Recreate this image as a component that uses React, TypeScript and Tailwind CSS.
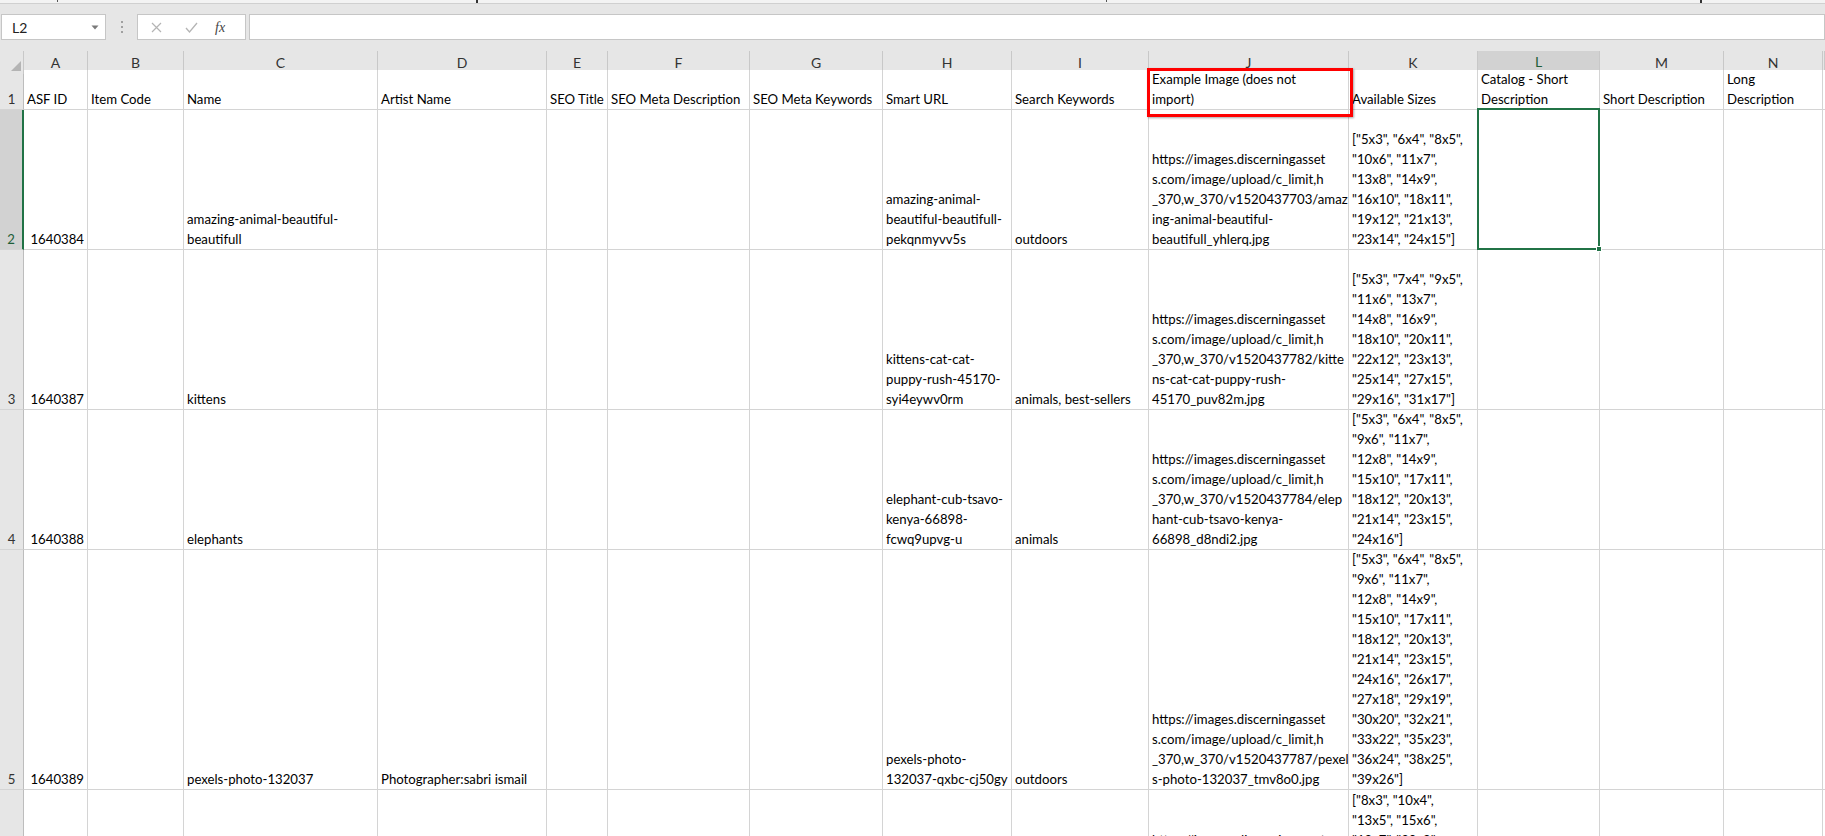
import React from "react";

type Cell = { lines?: string[]; right?: boolean; top?: boolean } | null;

const GRID =
  "grid grid-cols-[24px_64px_96px_194px_169px_61px_142px_133px_129px_137px_200px_129px_122px_124px_99px_1fr]";

const letters = ["A", "B", "C", "D", "E", "F", "G", "H", "I", "J", "K", "L", "M", "N", ""];

const rows: { n: string; h: string; cells: Cell[]; sel?: boolean }[] = [
  {
    n: "1",
    h: "h-[40px]",
    cells: [
      { lines: ["ASF ID"] },
      { lines: ["Item Code"] },
      { lines: ["Name"] },
      { lines: ["Artist Name"] },
      { lines: ["SEO Title"] },
      { lines: ["SEO Meta Description"] },
      { lines: ["SEO Meta Keywords"] },
      { lines: ["Smart URL"] },
      { lines: ["Search Keywords"] },
      { lines: ["Example Image (does not", "import)"] },
      { lines: ["Available Sizes"] },
      { lines: ["Catalog - Short", "Description"] },
      { lines: ["Short Description"] },
      { lines: ["Long", "Description"] },
      null,
    ],
  },
  {
    n: "2",
    h: "h-[140px]",
    sel: true,
    cells: [
      { lines: ["1640384"], right: true },
      null,
      { lines: ["amazing-animal-beautiful-", "beautifull"] },
      null,
      null,
      null,
      null,
      { lines: ["amazing-animal-", "beautiful-beautifull-", "pekqnmyvv5s"] },
      { lines: ["outdoors"] },
      {
        lines: [
          "https://images.discerningasset",
          "s.com/image/upload/c_limit,h",
          "_370,w_370/v1520437703/amaz",
          "ing-animal-beautiful-",
          "beautifull_yhlerq.jpg",
        ],
      },
      {
        lines: [
          '["5x3", "6x4", "8x5",',
          '"10x6", "11x7",',
          '"13x8", "14x9",',
          '"16x10", "18x11",',
          '"19x12", "21x13",',
          '"23x14", "24x15"]',
        ],
      },
      null,
      null,
      null,
      null,
    ],
  },
  {
    n: "3",
    h: "h-[160px]",
    cells: [
      { lines: ["1640387"], right: true },
      null,
      { lines: ["kittens"] },
      null,
      null,
      null,
      null,
      { lines: ["kittens-cat-cat-", "puppy-rush-45170-", "syi4eywv0rm"] },
      { lines: ["animals, best-sellers"] },
      {
        lines: [
          "https://images.discerningasset",
          "s.com/image/upload/c_limit,h",
          "_370,w_370/v1520437782/kitte",
          "ns-cat-cat-puppy-rush-",
          "45170_puv82m.jpg",
        ],
      },
      {
        lines: [
          '["5x3", "7x4", "9x5",',
          '"11x6", "13x7",',
          '"14x8", "16x9",',
          '"18x10", "20x11",',
          '"22x12", "23x13",',
          '"25x14", "27x15",',
          '"29x16", "31x17"]',
        ],
      },
      null,
      null,
      null,
      null,
    ],
  },
  {
    n: "4",
    h: "h-[140px]",
    cells: [
      { lines: ["1640388"], right: true },
      null,
      { lines: ["elephants"] },
      null,
      null,
      null,
      null,
      { lines: ["elephant-cub-tsavo-", "kenya-66898-", "fcwq9upvg-u"] },
      { lines: ["animals"] },
      {
        lines: [
          "https://images.discerningasset",
          "s.com/image/upload/c_limit,h",
          "_370,w_370/v1520437784/elep",
          "hant-cub-tsavo-kenya-",
          "66898_d8ndi2.jpg",
        ],
      },
      {
        lines: [
          '["5x3", "6x4", "8x5",',
          '"9x6", "11x7",',
          '"12x8", "14x9",',
          '"15x10", "17x11",',
          '"18x12", "20x13",',
          '"21x14", "23x15",',
          '"24x16"]',
        ],
      },
      null,
      null,
      null,
      null,
    ],
  },
  {
    n: "5",
    h: "h-[240px]",
    cells: [
      { lines: ["1640389"], right: true },
      null,
      { lines: ["pexels-photo-132037"] },
      { lines: ["Photographer:sabri ismail"] },
      null,
      null,
      null,
      { lines: ["pexels-photo-", "132037-qxbc-cj50gy"] },
      { lines: ["outdoors"] },
      {
        lines: [
          "https://images.discerningasset",
          "s.com/image/upload/c_limit,h",
          "_370,w_370/v1520437787/pexel",
          "s-photo-132037_tmv8o0.jpg",
        ],
      },
      {
        lines: [
          '["5x3", "6x4", "8x5",',
          '"9x6", "11x7",',
          '"12x8", "14x9",',
          '"15x10", "17x11",',
          '"18x12", "20x13",',
          '"21x14", "23x15",',
          '"24x16", "26x17",',
          '"27x18", "29x19",',
          '"30x20", "32x21",',
          '"33x22", "35x23",',
          '"36x24", "38x25",',
          '"39x26"]',
        ],
      },
      null,
      null,
      null,
      null,
    ],
  },
  {
    n: "",
    h: "h-[140px]",
    cells: [
      null,
      null,
      null,
      null,
      null,
      null,
      null,
      null,
      null,
      { lines: ["", "", "https://images.discerningasset"], top: true },
      { lines: ['["8x3", "10x4",', '"13x5", "15x6",', '"18x7", "20x8",'], top: true },
      null,
      null,
      null,
      null,
    ],
  },
];

function DataCell({ cell }: { cell: Cell }) {
  return (
    <div
      className={
        "relative flex flex-col overflow-hidden border-r border-b border-[#d4d4d4] bg-white px-[3px] " +
        (cell?.top ? "justify-start " : "justify-end ") +
        (cell?.right ? "items-end" : "items-start")
      }
    >
      {cell?.lines?.map((l, i) => (
        <div key={i} className="h-[20px] shrink-0 whitespace-nowrap leading-[20px]">
          {l}
        </div>
      ))}
    </div>
  );
}

export default function App() {
  return (
    <div className="relative h-[836px] w-[1825px] overflow-hidden bg-[#e6e6e6] font-[Lato,'Open_Sans',sans-serif] text-[13.2px] text-black">
      {/* top strip */}
      <div className="relative h-[4px] border-b border-[#d0d0d0] bg-[#f3f3f3]">
        <span className="absolute left-[57px] top-0 h-[2px] w-[1px] bg-[#555]" />
        <span className="absolute left-[476px] top-0 h-[3px] w-[2px] bg-[#333]" />
        <span className="absolute left-[1106px] top-0 h-[2px] w-[1px] bg-[#555]" />
        <span className="absolute left-[1700px] top-0 h-[3px] w-[2px] bg-[#333]" />
      </div>

      {/* formula bar */}
      <div className="mt-[10px] flex h-[26px] items-stretch">
        <div className="ml-[1px] flex w-[105px] items-center justify-between border border-[#c6c6c6] bg-white pl-[10px] pr-[6px]">
          <span className="text-[14px] text-[#222]">L2</span>
          <svg width="8" height="5" viewBox="0 0 8 5">
            <path d="M0.5 0.5 L7.5 0.5 L4 4.5 Z" fill="#7a7a7a" />
          </svg>
        </div>
        <div className="flex w-[31px] flex-col items-center justify-center gap-[3px]">
          <span className="h-[2px] w-[2px] bg-[#a0a0a0]" />
          <span className="h-[2px] w-[2px] bg-[#a0a0a0]" />
          <span className="h-[2px] w-[2px] bg-[#a0a0a0]" />
        </div>
        <div className="flex w-[109px] items-center border border-[#c6c6c6] bg-white">
          <svg className="ml-[13px]" width="11" height="11" viewBox="0 0 11 11">
            <path d="M1 1 L10 10 M10 1 L1 10" stroke="#b4b4b4" strokeWidth="1.2" />
          </svg>
          <svg className="ml-[23px]" width="13" height="11" viewBox="0 0 13 11">
            <path d="M1 6 L4.5 10 L12 1" stroke="#b4b4b4" strokeWidth="1.3" fill="none" />
          </svg>
          <span className="ml-[17px] font-['Liberation_Serif',serif] text-[14px] italic text-[#444]">fx</span>
        </div>
        <div className="ml-[3px] flex-1 border border-[#c6c6c6] bg-white" />
      </div>

      {/* sheet */}
      <div className="mt-[11px]">
        {/* column header */}
        <div className={GRID + " h-[19px]"}>
          <div className="relative border-r border-[#c8c8c8] bg-[#e6e6e6]">
            <svg className="absolute right-[2px] bottom-[3px]" width="10" height="10" viewBox="0 0 10 10">
              <path d="M10 0 L10 10 L0 10 Z" fill="#b4b4b4" />
            </svg>
          </div>
          {letters.map((l, i) => (
            <div
              key={i}
              className={
                "flex items-center justify-center border-r text-[14px] " +
                (l === "L"
                  ? "border-[#c8c8c8] border-b-2 border-b-[#217346] bg-[#d2d2d2] text-[#1e5e38]"
                  : "border-[#c8c8c8] bg-[#e6e6e6] text-[#333]")
              }
            >
              {l}
            </div>
          ))}
        </div>

        {rows.map((r, idx) => (
          <div key={idx} className={GRID + " " + r.h}>
            <div
              className={
                "flex items-end justify-center border-b border-[#d4d4d4] leading-[20px] " +
                (r.sel
                  ? "border-r-2 border-r-[#217346] bg-[#d2d2d2] text-[#1e5e38]"
                  : "border-r border-r-[#bdbdbd] bg-[#e6e6e6] text-[#333]")
              }
            >
              {r.n}
            </div>
            {r.cells.map((c, i) => (
              <DataCell key={i} cell={c} />
            ))}
          </div>
        ))}
      </div>

      {/* selected cell L2 */}
      <div className="absolute left-[1477px] top-[108px] h-[142px] w-[123px] border-2 border-[#217346]">
        <div className="absolute -right-[4px] -bottom-[4px] h-[6px] w-[6px] border border-white bg-[#217346]" />
      </div>

      {/* red highlight */}
      <div className="absolute left-[1147px] top-[68px] h-[49px] w-[206px] border-[3px] border-[#ff0000] shadow-[1px_1px_2px_rgba(0,0,0,0.35)]" />
    </div>
  );
}
